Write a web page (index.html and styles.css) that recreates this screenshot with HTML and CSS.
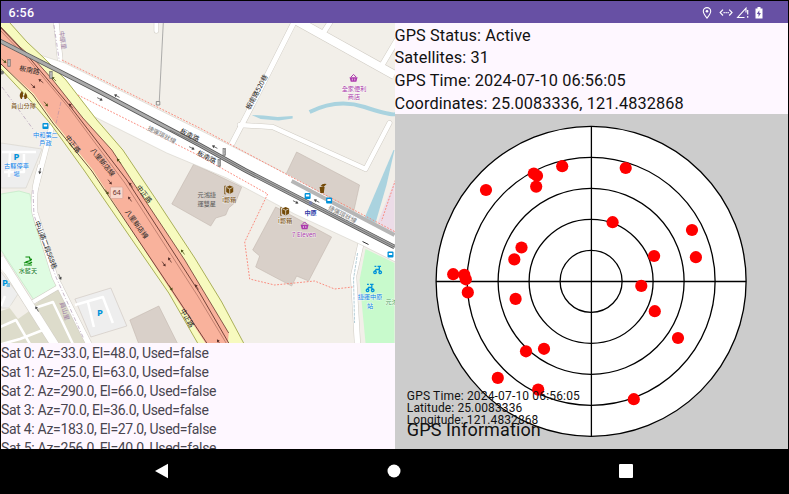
FILE: index.html
```html
<!DOCTYPE html>
<html lang="zh-Hant">
<head>
<meta charset="utf-8">
<title>GPS Information</title>
<link rel="stylesheet" href="styles.css">
</head>
<body>
<div class="device">
  <header class="status-bar">
    <span class="clock">6:56</span>
    <svg class="status-icons" width="64" height="16" viewBox="0 0 64 16" fill="none" stroke="#fff">
      <path d="M6 13.200C3.500 10 2.300 8.300 2.300 6.300a3.700 3.700 0 0 1 7.400 0c0 2-1.200 3.700-3.700 6.900z" stroke-width="1.100"/>
      <circle cx="6" cy="6.300" r="1.300" fill="#fff" stroke="none"/>
      <path d="M22 4.700l-2.800 2.900L22 10.500M28.200 4.700L31 7.600 28.200 10.500" stroke-width="1.200"/>
      <path d="M22.500 7.600h5.400" stroke-width="1.200" stroke-dasharray="1.300 .7"/>
      <path d="M45 7.500V3.200L36.600 12.500h6.900" stroke-width="1.100"/>
      <path d="M46.700 5v4.500M46.700 11v1.800" stroke-width="1.200"/>
      <path d="M54.500 3.400h2V2h3v1.400h2V13.500h-7z" fill="#fff" stroke="none"/>
      <path d="M58.300 5.200L55.800 9h1.700v3l2.400-4h-1.600z" fill="#6750a4" stroke="none"/>
    </svg>
  </header>
  <main class="content">
    <section class="left">
      <svg class="map" viewBox="1 23 394 320" preserveAspectRatio="none">
        <rect x="0" y="22" width="396" height="322" fill="#f2efe9"/>
        <!-- land use -->
        <path d="M1 194l18-3 11 3 4 27 14 41 12 22-26 16L1 250z" fill="#dffce2" stroke="#b8e6bd" stroke-width=".6"/>
        <path d="M1 143l41 6-16 39H1z" fill="#eeeeee" stroke="#d5d1c9" stroke-width=".6"/>
        <path d="M1 272l17 22-9 14H1z" fill="#eee" stroke="#d5d1c9" stroke-width=".6"/>
        <path d="M33 306l27-20 28 57H54z" fill="#dddccb"/>
        <path d="M1 311l15-5 21 3 19 34H1z" fill="#dddccb"/>
        <path d="M19 298l16 9-17 12-9-12z" fill="#f2efe9"/>
        <path d="M75 299l36-11 16 38-36 11z" fill="#eee" stroke="#ccc5be" stroke-width=".6"/>
        <path d="M366 249l29 14v80h-29l-6-63z" fill="#c8facc"/>
        <path d="M395 150l-8 35-11 38-11-5 29-68z" fill="#aad3df"/>
        <path d="M395 181v54l-17-12z" fill="#ecdce8"/>
        <path d="M252 115l9 4 18 1.500 14-2v-2.500l-15 1-14-1.500z" fill="#aad3df"/>
        <path d="M310 112q28-14 55-5t32 7" fill="none" stroke="#aad3df" stroke-width="4"/>
        <!-- buildings -->
        <g fill="#d9d0c9" stroke="#c2b7ae" stroke-width=".6">
          <path d="M194 164l48 23-6 15-7 6-3 7-10 3-5 8-39-22z"/>
          <path d="M297 152l63 33-6 27-68-37z"/>
          <path d="M276 207l56 30-23 44-12-5-5 10-36-19 4-11-7-6z"/>
          <path d="M130 320l29-14 19 38h-39z"/>
        </g>
        <!-- local streets -->
        <g fill="none" stroke-linejoin="round">
          <g stroke="#d0ccc4">
            <path d="M294 23l-39 77-26 50" stroke-width="6"/>
            <path d="M296 20l99 55" stroke-width="9.500"/>
            <path d="M323 54l9-34M382 66l16-27" stroke-width="0"/>
            <path d="M321 55l11-35" stroke-width="0"/>
            <path d="M240 125l33 2 93 42 24-46" stroke-width="5.500" stroke-linecap="round"/>
            <path d="M362 241l-8 35 4 69" stroke-width="6.500"/>
            <path d="M53 122l-17 65" stroke-width="6"/>
            <path d="M41 165q-9 28-6 48l20 64 34 67" stroke-width="6.500"/>
            <path d="M0 258l55 87" stroke-width="9"/>
            <path d="M33 302l29-17" stroke-width="5"/>
            <path d="M56 20l5 47" stroke-width="6"/>
            <path d="M156.500 20v11" stroke-width="5" stroke-linecap="round"/>
            <path d="M323 34l9-14M382 66l16-27" stroke-width="6"/>
          </g>
          <g stroke="#fff">
            <path d="M294 23l-39 77-26 50" stroke-width="5"/>
            <path d="M296 20l99 55" stroke-width="8.500"/>
            <path d="M323 34l9-14M382 66l16-27" stroke-width="5"/>
            <path d="M240 125l33 2 93 42 24-46" stroke-width="4.500" stroke-linecap="round"/>
            <path d="M362 241l-8 35 4 69" stroke-width="5.500"/>
            <path d="M53 122l-17 65" stroke-width="5"/>
            <path d="M41 165q-9 28-6 48l20 64 34 67" stroke-width="5.500"/>
            <path d="M0 258l55 87" stroke-width="8"/>
            <path d="M33 302l29-17" stroke-width="4"/>
            <path d="M56 20l5 47" stroke-width="5"/>
            <path d="M156.500 20v11" stroke-width="4" stroke-linecap="round"/>
            <path d="M2 152h34M4 172h20V154M10 152l-1 25" stroke-width="2.500"/>
            <path d="M75 305l28-8 10 26M88 302l6 25M35 308l18-6 20 42M0 327l16-7 14 24M43 330l-23 9-18 5" stroke-width="2.500"/>
            <path d="M1 267l7 8M1 306l4-10" stroke-width="2.500"/>
          </g>
          <path d="M163.500 23l-4 78" stroke="#999" stroke-width=".8"/>
          <rect x="156.500" y="101.500" width="3.500" height="3.500" stroke="#777" stroke-width=".8"/>
          <path d="M358 253l-4 26 1 44" stroke="#94b7c4" stroke-width=".7" stroke-dasharray="3 1"/>
          <path d="M2 87l31 42M33 190l1 25 22 62 28 62M54 25l6 40" stroke="#b9a6bd" stroke-width=".8" stroke-dasharray="4 2 1 2"/>
        </g>
        <!-- main street -->
        <path d="M40 55l25 8 135 67 95 48 101 57v27l-34-17-67-31-68-36-60-25-100-50-19-20z" fill="#fff" stroke="#d5d1ca" stroke-width=".6"/>
        <!-- expressway -->
        <path d="M-2 10l12 13 17 19 16 15 23 23 31 40 26 30 35 52 37 56 27 44 23 43h-46l-30-52L84 170 50 123 30 100 0 68z" fill="#f7fabf" stroke="#a2a74b" stroke-width=".9"/>
        <path d="M0 26l20 21 15 13 18 20 30 38 29 32 21 32 52 78 44 73-1 12h-21l-37-56-77-119-39-48-20-28L0 63z" fill="#f9b29c"/>
        <g fill="none" stroke="#68382f" stroke-width=".9">
          <path d="M0 63l33 32 20 28 39 48 78 116 37 56"/>
          <path d="M0 27l27 28 43 51 57 74 73 113 29 50"/>
          <path d="M0 30l27 28 43 51 55 74 73 113 29 48" stroke="#8b5044" stroke-width=".5"/>
          <path d="M0 26l20 21 15 13 18 20 30 38 29 32 21 32 52 78 44 73" stroke-width=".8"/>
          <path d="M61 102l-5 22" stroke="#b98fa5" stroke-width=".7" stroke-dasharray="4 2 1 2"/>
        </g>
        <!-- metro line -->
        <g fill="none">
          <path d="M292 181l103 54" stroke="#b6b6b6" stroke-width="3.800"/>
          <path d="M0 41l100 51 100 53 45 25 150 77" stroke="#555" stroke-width="4.600"/>
          <path d="M0 41l100 51 100 53 45 25 150 77" stroke="#aaa" stroke-width="3"/>
          <path d="M170 130l30 15 45 25 150 77" stroke="#666" stroke-width=".8"/>
          <path d="M62 60l138 68 90 48 106 56M78 95l122 61 68 38M268 194l-23 48 5 37 25 6 40-4 20 8 18-2M396 180l-14 41" stroke="#fa8072" stroke-width=".9" stroke-dasharray="1.800 1.500"/>
        </g>
        <!-- direction arrows -->
        <defs>
          <g id="arr"><path d="M-3 0h5" stroke-width=".7" fill="none"/><path d="M.5-1.600L3.200 0 .5 1.600z" stroke="none"/></g>
          <g id="box"><path d="M-3-3l3.500-1.500L4-3v5L.5 4-3 2z"/><path d="M-2.500-2.500L.5-1.200l3-1.300M.5-1v5" stroke="#f2efe9" stroke-width=".7" fill="none"/><path d="M-3.500-4h-1v8h1" fill="none" stroke="#734a08" stroke-width=".8"/></g>
          <g id="bus"><rect x="-3" y="-3" width="6" height="6" rx="1"/><path d="M-1.700-1.500h3.400v2h-3.400z" fill="#fff"/></g>
          <g id="light"><rect x="-1.200" y="-3.500" width="2.400" height="7" fill="#eee" stroke="#555" stroke-width=".6"/><path d="M0-2.700v5.400" stroke="#444" stroke-width="1" stroke-dasharray="1.200 .9"/></g>
          <g id="basket"><path d="M-4-.8h8l-1.200 4.500h-5.600z"/><path d="M-2.500-1L0-3.600 2.500-1" stroke="#ac39ac" fill="none"/><path d="M-1.200.5v2M1.200.5v2" stroke="#fff" stroke-width=".6"/></g>
          <g id="bike" fill="none" stroke="#0092da" stroke-width="1.300"><circle cx="-2.500" cy="2.800" r="1.300"/><circle cx="2.700" cy="2.800" r="1.300"/><path d="M-2.500 2.500L-1.500 0h3l1 2.500M1.800 0V-3.500M-3-3.200h1.800M0-3.200h3.500"/></g>
        </defs>
        <g fill="#59302a" stroke="#59302a">
          <use href="#arr" transform="translate(41 81) rotate(218)"/>
          <use href="#arr" transform="translate(33 86) rotate(43)"/>
          <use href="#arr" transform="translate(71 106) rotate(230)"/>
          <use href="#arr" transform="translate(110 182) rotate(52)"/>
          <use href="#arr" transform="translate(131 185) rotate(235)"/>
          <use href="#arr" transform="translate(130 199) rotate(235)"/>
          <use href="#arr" transform="translate(164 264) rotate(55)"/>
          <use href="#arr" transform="translate(170 260) rotate(236)"/>
          <use href="#arr" transform="translate(197 287) rotate(236)"/>
          <use href="#arr" transform="translate(219 342) rotate(236)"/>
        </g>
        <g fill="#4b5015" stroke="#4b5015">
          <use href="#arr" transform="translate(4 61) rotate(40)"/>
          <use href="#arr" transform="translate(54 79) rotate(225)"/>
          <use href="#arr" transform="translate(46 104) rotate(50)"/>
          <use href="#arr" transform="translate(119 161) rotate(230)"/>
          <use href="#arr" transform="translate(107 192) rotate(55)"/>
          <use href="#arr" transform="translate(183 252) rotate(235)"/>
          <use href="#arr" transform="translate(171 288) rotate(57)"/>
        </g>
        <g fill="#444" stroke="#444">
          <use href="#arr" transform="translate(117 96) rotate(207)"/>
          <use href="#arr" transform="translate(100 99) rotate(27)"/>
          <use href="#arr" transform="translate(192 148) rotate(27)"/>
          <use href="#arr" transform="translate(215 147) rotate(207)"/>
          <use href="#arr" transform="translate(296 202) rotate(27)"/>
          <use href="#arr" transform="translate(317 201) rotate(207)"/>
          <use href="#arr" transform="translate(40 171) rotate(100)"/>
          <use href="#arr" transform="translate(60 277) rotate(67)"/>
          <use href="#arr" transform="translate(37 309) rotate(240)"/>
        </g>
        <use href="#light" x="9" y="63"/><use href="#light" x="51" y="75"/>
        <use href="#light" x="224.500" y="152"/><use href="#light" x="219.500" y="163"/>
        <circle cx="2" cy="72.500" r="2" fill="#777"/>
        <path d="M363 241.500l6 3" stroke="#333" stroke-width="1"/>
        <!-- points of interest -->
        <path d="M22 91q2 2 1 5 3-1 2-4 4 4 1 7h-1.500q0-2-1-3-1.500 1-1.500 3h-1q-3-4 1-8z" fill="#734a08"/>
        <g fill="#734a08"><use href="#box" x="229.500" y="190"/><use href="#box" x="285.500" y="211.500"/>
          <path d="M320 187h5l-.8 6h-3.400zM321 186q2-3 6-2l1-1-4 4z"/></g>
        <g fill="#0092da"><use href="#bus" x="45.500" y="126"/><use href="#bus" x="308" y="196"/><use href="#bus" x="329.500" y="200.500"/><use href="#bus" x="391" y="254.500"/></g>
        <circle cx="311" cy="203" r="1.800" fill="#7981b0"/>
        <g fill="#ac39ac"><use href="#basket" x="354" y="78"/><use href="#basket" x="305" y="225.500"/></g>
        <use href="#bike" x="378" y="269.500"/><use href="#bike" x="370.500" y="287.500"/>
        <path d="M25.500 257h4l1 3.500-5 1.500M24 263q2-1 4 0t4-1M24 265h8" stroke="#0a8a0a" stroke-width="1.200" fill="none"/><circle cx="31" cy="259.500" r="1.100" fill="#0a8a0a"/>
        <rect x="110.500" y="187" width="12.500" height="11.500" rx="1" fill="#f8d7cc" stroke="#d9a497" stroke-width=".7"/>
        <text class="shield" x="117" y="195.500">64</text>
        <!-- labels -->
        <g class="lbl rail">
          <text transform="translate(162 134.500) rotate(27)" y="2.500">捷運環狀線</text>
          <text transform="translate(343 214) rotate(27)" y="2.500">捷運環狀線</text>
        </g>
        <g class="lbl road">
          <text transform="translate(29.500 70) rotate(12)" y="2.500">板南路</text>
          <text transform="translate(190 135) rotate(27)" y="2.500">板南路</text>
          <text transform="translate(207 157) rotate(27)" y="2.500">板南路</text>
          <text transform="translate(257 92) rotate(-62)" y="2.500">板南路520巷</text>
          <text transform="translate(73 144) rotate(52)" y="2.500">中正路</text>
          <text transform="translate(144.500 194) rotate(52)" y="2.500">中正路</text>
          <text transform="translate(187.500 318) rotate(60)" y="2.500">中正路</text>
          <text transform="translate(103 162) rotate(51)" y="2.500">八里新店線</text>
          <text transform="translate(137 224) rotate(54)" y="2.500">八里新店線</text>
          <text transform="translate(46 245) rotate(69)" y="2.500" textLength="51">中山路二段568巷</text>
        </g>
        <g class="lbl village">
          <text transform="translate(63 40) rotate(82)" y="2.500">中原里</text>
          <text transform="translate(65 311) rotate(73)" y="2.500">員山里</text>
        </g>
        <g class="lbl brown"><text x="23.500" y="108.500">員山分隊</text><text x="229.500" y="202">i郵箱</text><text x="285.500" y="223.500">i郵箱</text></g>
        <g class="lbl blue"><text x="45.500" y="137">中和第二</text><text x="45.500" y="145.500">戶政</text><text x="16.500" y="168.500">古驛停車</text><text x="16.500" y="176.500">場</text><text x="370.500" y="299.500">捷運中原</text><text x="370.500" y="308">站</text></g>
        <g class="lbl purple"><text x="354.500" y="91">全家便利</text><text x="354.500" y="99">商店</text><text x="304.500" y="237">7 Eleven</text></g>
        <g class="lbl gray"><text x="207" y="197">元鴻捷</text><text x="207" y="206">運雙星</text></g>
        <g class="lbl green"><text x="28" y="273">水藍天</text></g>
        <text class="lbl park" x="386" y="304.500">元鴻</text>
        <text class="lbl station" x="311" y="215.500">中原</text>
        <g class="parking"><text x="16.500" y="160.500">P</text><text x="100" y="316">P</text><text x="5" y="286">P</text></g>
        <path d="M7 284h3M6.500 286h3.500" stroke="#0092da" stroke-width="1"/>
      </svg>
      <ul class="sat-list">
        <li>Sat 0: Az=33.0, El=48.0, Used=false</li>
        <li>Sat 1: Az=25.0, El=63.0, Used=false</li>
        <li>Sat 2: Az=290.0, El=66.0, Used=false</li>
        <li>Sat 3: Az=70.0, El=36.0, Used=false</li>
        <li>Sat 4: Az=183.0, El=27.0, Used=false</li>
        <li>Sat 5: Az=256.0, El=40.0, Used=false</li>
      </ul>
    </section>
    <section class="right">
      <div class="summary">
        <p>GPS Status: Active</p>
        <p>Satellites: 31</p>
        <p>GPS Time: 2024-07-10 06:56:05</p>
        <p>Coordinates: 25.0083336, 121.4832868</p>
      </div>
      <svg class="sky" viewBox="395.200 114 393.500 334.500">
        <g fill="#fff" stroke="#000" stroke-width="1.300">
          <circle cx="591.300" cy="281.300" r="155"/>
          <circle cx="591.300" cy="281.300" r="124"/>
          <circle cx="591.300" cy="281.300" r="93"/>
          <circle cx="591.300" cy="281.300" r="62"/>
          <circle cx="591.300" cy="281.300" r="31"/>
          <path d="M436.300 281.500h310M591.600 126.300v310"/>
        </g>
        <g fill="#f00">
          <circle cx="562.400" cy="166.200" r="6.100"/><circle cx="534" cy="173.500" r="6.100"/><circle cx="537.200" cy="175.800" r="6.100"/><circle cx="536.400" cy="186.600" r="6.100"/><circle cx="486.200" cy="190" r="6.100"/>
          <circle cx="625.900" cy="168" r="6.100"/><circle cx="612.800" cy="222.200" r="6.100"/><circle cx="692.200" cy="230" r="6.100"/><circle cx="696.100" cy="257.200" r="6.100"/><circle cx="654.300" cy="256" r="6.100"/>
          <circle cx="641.500" cy="285.900" r="6.100"/><circle cx="655" cy="311.200" r="6.100"/><circle cx="678.200" cy="338" r="6.100"/><circle cx="634" cy="399.200" r="6.100"/><circle cx="538.400" cy="389.600" r="6.100"/>
          <circle cx="498" cy="377.900" r="6.100"/><circle cx="526.200" cy="351.300" r="6.100"/><circle cx="544.200" cy="348.800" r="6.100"/><circle cx="515.800" cy="298.900" r="6.100"/><circle cx="468" cy="292.400" r="6.100"/>
          <circle cx="466" cy="279.300" r="6.100"/><circle cx="464.500" cy="274.900" r="6.100"/><circle cx="453.400" cy="274.200" r="6.100"/><circle cx="514.500" cy="259.400" r="6.100"/><circle cx="521.700" cy="247.500" r="6.100"/>
        </g>
        <g class="sky-text">
          <text x="407" y="399.600" textLength="173">GPS Time: 2024-07-10 06:56:05</text>
          <text x="407" y="412" textLength="115.500">Latitude: 25.0083336</text>
          <text x="407" y="424.200" textLength="131.500">Longitude: 121.4832868</text>
          <text class="sky-title" x="407" y="436.300" textLength="134">GPS Information</text>
        </g>
      </svg>
    </section>
  </main>
  <nav class="nav-bar">
    <svg viewBox="0 0 16 16"><path d="M1 8L14 .8v14.400z"/></svg>
    <svg viewBox="0 0 16 16"><circle cx="8" cy="8" r="6.500"/></svg>
    <svg viewBox="0 0 16 16"><rect x="1" y="1" width="14" height="14" rx="1"/></svg>
  </nav>
</div>
</body>
</html>
```
FILE: styles.css
```css
* { box-sizing: border-box; }

body {
  margin: 0;
  background: #000;
  font-family: Roboto, "Noto Sans CJK TC", sans-serif;
}

.device {
  width: 789px;
  height: 494px;
  padding: 1px 1px 0;
  display: flex;
  flex-direction: column;
  overflow: hidden;
  background: #000;
}

.status-bar {
  height: 22px;
  flex: none;
  display: flex;
  align-items: center;
  justify-content: space-between;
  padding: 1px 23px 0 7.500px;
  background: #6750a4;
  color: #fff;
}

.clock {
  font-size: 12.500px;
  font-weight: 500;
  letter-spacing: .3px;
}

.content {
  height: 425.500px;
  flex: none;
  display: grid;
  grid-template-columns: 393.500px 1fr;
  background: #fef7ff;
}

.left {
  display: flex;
  flex-direction: column;
  min-height: 0;
  overflow: hidden;
}

.map {
  display: block;
  width: 100%;
  height: 320px;
  flex: none;
}

.sat-list {
  list-style: none;
  margin: 0;
  padding: 1px 0 0;
  overflow: hidden;
  color: #49454f;
  font-size: 14px;
  line-height: 19.100px;
  letter-spacing: -.31px;
  white-space: nowrap;
}

.right {
  display: flex;
  flex-direction: column;
}

.summary {
  height: 91px;
  flex: none;
  padding-top: 1.600px;
  color: #111;
  font-size: 16.300px;
  line-height: 22.700px;
  letter-spacing: .1px;
  white-space: nowrap;
}

.summary p { margin: 0; }

.sky {
  display: block;
  width: 100%;
  height: 334.500px;
  background: #ccc;
}

.sky-text {
  font-size: 12px;
  fill: #111;
}

.sky-title { font-size: 18px; }

.nav-bar {
  flex: 1;
  display: flex;
  justify-content: center;
  align-items: center;
  gap: 216px;
  padding-right: 2px;
}

.nav-bar svg {
  width: 16px;
  height: 16px;
  fill: #fff;
}

.lbl {
  font-family: "Noto Sans CJK TC", "Noto Sans", sans-serif;
  font-size: 6.200px;
  text-anchor: middle;
  paint-order: stroke;
  stroke: rgba(255, 255, 255, .6);
  stroke-width: 1px;
}

.road { fill: #222; stroke: none; font-size: 6.800px; }
.rail { fill: #777; }
.village { fill: #9a7aa3; stroke: none; }
.brown { fill: #734a08; }
.blue { fill: #0b7fe8; }
.purple { fill: #ac39ac; }
.gray { fill: #555; stroke: none; }
.green { fill: #0a7a20; }
.park { fill: #4f9a5b; text-anchor: start; }
.station { fill: #2f3ea8; font-weight: 700; }

.shield {
  font: 7px "Noto Sans", sans-serif;
  text-anchor: middle;
  fill: #6b332a;
}

.parking {
  font: 700 9.500px "Noto Sans", sans-serif;
  text-anchor: middle;
  fill: #0092da;
}
```
